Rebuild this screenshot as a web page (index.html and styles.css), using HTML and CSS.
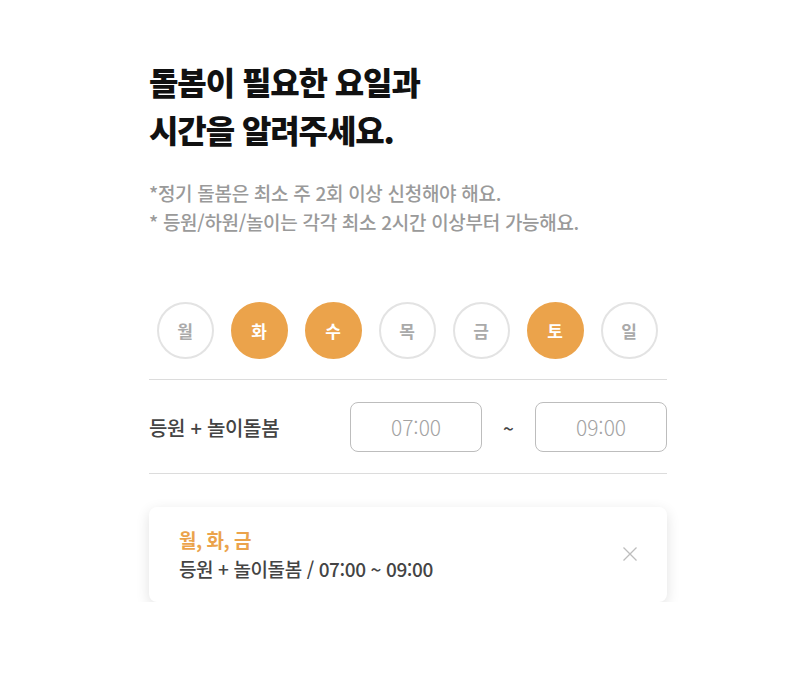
FILE: index.html
```html
<!DOCTYPE html>
<html lang="ko">
<head>
<meta charset="utf-8">
<link rel="stylesheet" href="styles.css">
</head>
<body>
<main class="page">
  <h1 class="title">돌봄이 필요한 요일과<br>시간을 알려주세요.</h1>
  <p class="notes">*정기 돌봄은 최소 주 2회 이상 신청해야 해요.<br>* 등원/하원/놀이는 각각 최소 2시간 이상부터 가능해요.</p>
  <div class="days">
    <span class="day">월</span>
    <span class="day on">화</span>
    <span class="day on">수</span>
    <span class="day">목</span>
    <span class="day">금</span>
    <span class="day on">토</span>
    <span class="day">일</span>
  </div>
  <div class="timerow">
    <span class="label">등원 + 놀이돌봄</span>
    <div class="times">
      <span class="time">07:00</span>
      <span class="tilde">~</span>
      <span class="time">09:00</span>
    </div>
  </div>
  <div class="card">
    <div class="card-text">
      <div class="card-days">월, 화, 금</div>
      <div class="card-desc">등원 + 놀이돌봄 / 07:00 ~ 09:00</div>
    </div>
    <svg class="close" width="16" height="16" viewBox="0 0 16 16"><path d="M1.5 1.5L14.5 14.5M14.5 1.5L1.5 14.5" stroke="#bdbdbd" stroke-width="1.3" fill="none"/></svg>
  </div>
</main>
</body>
</html>
```
FILE: styles.css
```css
* { box-sizing: border-box; }
html, body { margin: 0; padding: 0; background: #fff; }
body {
  font-family: "Noto Sans CJK KR", "Noto Sans", sans-serif;
  color: #222;
}
.page {
  width: 518px;
  margin-left: 149px;
  padding-top: 57px;
}
.title {
  margin: 0;
  font-size: 32px;
  line-height: 48px;
  font-weight: 800;
  color: #111;
  letter-spacing: -1.1px;
}
.notes {
  margin: 25px 0 0;
  font-size: 19px;
  line-height: 29px;
  color: #9a9a9a;
  font-weight: 500;
  letter-spacing: -0.3px;
}
.days {
  display: flex;
  justify-content: center;
  gap: 17px;
  margin-top: 66px;
  padding-bottom: 20px;
  border-bottom: 1px solid #dcdcdc;
  padding-right: 2px;
}
.day {
  width: 57px;
  height: 57px;
  border-radius: 50%;
  border: 2px solid #e3e3e3;
  display: flex;
  align-items: center;
  justify-content: center;
  font-size: 17px;
  font-weight: 700;
  color: #aaa;
}
.day.on {
  background: #eba34b;
  border-color: #eba34b;
  color: #fff;
}
.timerow {
  display: flex;
  align-items: center;
  justify-content: space-between;
  padding: 22px 0 21px;
  border-bottom: 1px solid #dcdcdc;
}
.label {
  font-size: 20px;
  font-weight: 500;
  color: #444;
  letter-spacing: -0.3px;
}
.times {
  display: flex;
  align-items: center;
}
.time {
  width: 132px;
  height: 50px;
  border: 1px solid #bdbdbd;
  border-radius: 8px;
  display: flex;
  align-items: center;
  justify-content: center;
  font-size: 21px;
  color: #a3a3a3;
  font-weight: 300;
}
.tilde {
  width: 53px;
  text-align: center;
  font-size: 19px;
  font-weight: 500;
  color: #444;
}
.card {
  margin-top: 33px;
  height: 95px;
  border-radius: 8px;
  background: #fff;
  box-shadow: 0 4px 14px rgba(0,0,0,0.12);
  display: flex;
  align-items: center;
  justify-content: space-between;
  padding: 0 29px 0 30px;
}
.card-days {
  font-size: 19px;
  font-weight: 700;
  color: #eba34b;
  line-height: 28px;
  letter-spacing: -0.5px;
}
.card-desc {
  font-size: 19px;
  font-weight: 500;
  color: #444;
  line-height: 30px;
  letter-spacing: -0.4px;
}
.close { margin-bottom: 2px; }
```
